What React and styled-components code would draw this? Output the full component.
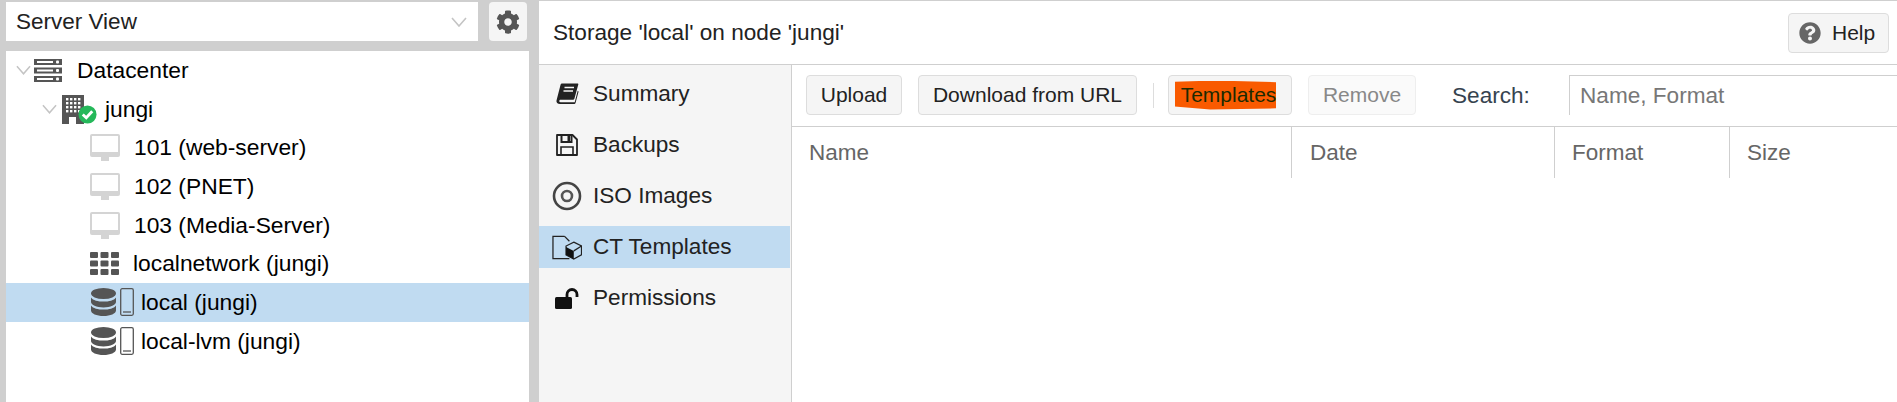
import styled, { createGlobalStyle } from 'styled-components';
import { FaCog, FaQuestionCircle } from 'react-icons/fa';

const GlobalStyle = createGlobalStyle`
    html, body, #root { margin: 0; height: 100%; overflow: hidden; }
    body { font-family: "Liberation Sans", Arial, sans-serif; color: #000; }
`;

const Page = styled.div`
    display: flex;
    height: 402px;
    background: #cfcfcf;
`;

const Sidebar = styled.aside`
    width: 523px;
    margin: 2px 10px 0 6px;
    display: flex;
    flex-direction: column;
    gap: 10px;
`;

const ViewBar = styled.div`
    display: flex;
    gap: 11px;
    height: 39px;
    margin-right: 2px;
`;

const ViewSelect = styled.div`
    flex: 1;
    display: flex;
    align-items: center;
    justify-content: space-between;
    padding: 0 11px 0 10px;
    background: #fff;
    font-size: 22.5px;
    color: #222;
`;

const GearButton = styled.button`
    width: 38px;
    border: 0;
    border-radius: 4px;
    padding: 0;
    background: #f5f5f5;
    color: #555;
    font-size: 24px;
    display: flex;
    align-items: center;
    justify-content: center;
`;

const Tree = styled.div`
    flex: 1;
    background: #fff;
`;

const TreeRow = styled.div`
    display: flex;
    align-items: center;
    height: 38.7px;
    padding-left: ${p => p.$indent}px;
    background: ${p => (p.$selected ? '#c0dbf1' : 'transparent')};
    font-size: 22.8px;
`;

const Toggle = styled.span`
    width: ${p => p.$width}px;
    display: flex;
    align-items: center;
`;

const TreeIcon = styled.span`
    position: relative;
    width: ${p => p.$width}px;
    flex: none;
    display: flex;
    align-items: center;
    gap: 4px;
`;

const Badge = styled.svg`
    position: absolute;
    left: 16px;
    top: 10px;
`;

const Main = styled.main`
    flex: 1;
    min-width: 0;
    display: flex;
    flex-direction: column;
    background: #fff;
    border-top: 1px solid #cfcfcf;
`;

const Header = styled.header`
    height: 63px;
    flex: none;
    display: flex;
    align-items: center;
    justify-content: space-between;
    padding: 0 8px 0 14px;
    border-bottom: 1px solid #cfcfcf;
    font-size: 22.6px;
    color: #222;
`;

const HelpButton = styled.button`
    height: 40px;
    width: 101px;
    display: flex;
    align-items: center;
    gap: 11px;
    padding: 0 0 0 10px;
    background: #f5f5f5;
    border: 1px solid #ddd;
    border-radius: 4px;
    font: 21px "Liberation Sans", Arial, sans-serif;
    color: #222;
    svg { color: #666; font-size: 22px; }
`;

const Content = styled.div`
    flex: 1;
    display: flex;
    min-height: 0;
`;

const Menu = styled.nav`
    width: 251px;
    flex: none;
    display: flex;
    flex-direction: column;
    gap: 9px;
    padding: 8px 1px 0 0;
    background: #f5f5f5;
    border-right: 1px solid #cfcfcf;
`;

const MenuItem = styled.div`
    height: 42px;
    display: flex;
    align-items: center;
    padding-left: 54px;
    position: relative;
    font-size: 22.6px;
    color: #222;
    background: ${p => (p.$active ? '#c0dbf1' : 'transparent')};
`;

const MenuIcon = styled.span`
    position: absolute;
    left: 13px;
    width: 30px;
    display: flex;
    justify-content: center;
`;

const Panel = styled.section`
    flex: 1;
    min-width: 0;
    display: flex;
    flex-direction: column;
`;

const Toolbar = styled.div`
    height: 51px;
    flex: none;
    display: flex;
    align-items: flex-start;
    gap: 16px;
    padding: 10px 0 0 14px;
    border-bottom: 1px solid #cfcfcf;
`;

const ToolButton = styled.button`
    height: 40px;
    width: ${p => p.$width}px;
    flex: none;
    padding: 0;
    background: ${p => (p.$disabled ? '#fafafa' : '#f5f5f5')};
    border: 1px solid ${p => (p.$disabled ? '#eee' : '#ddd')};
    border-radius: 4px;
    font: 21px "Liberation Sans", Arial, sans-serif;
    color: ${p => (p.$disabled ? '#888' : '#222')};
`;

const Highlight = styled.span`
    display: inline-block;
    padding: 2px 0 3px 6px;
    margin-right: 9px;
    background: #f95a00;
    color: #1c2a00;
    clip-path: polygon(0 4%, 40% 0, 100% 6%, 100% 96%, 35% 100%, 0 90%);
`;

const Separator = styled.span`
    width: 1px;
    height: 25px;
    flex: none;
    margin: 8px -2px 0 0;
    background: #ddd;
`;

const SearchLabel = styled.label`
    margin: 8px 0 0 20px;
    width: 101px;
    flex: none;
    font-size: 22.6px;
    color: #36434f;
`;

const SearchField = styled.input`
    flex: 1;
    min-width: 0;
    height: 40px;
    box-sizing: border-box;
    padding: 0 10px;
    border: 0;
    border-top: 1px solid #cfcfcf;
    border-left: 1px solid #cfcfcf;
    outline: 0;
    font: 22.6px "Liberation Sans", Arial, sans-serif;
    &::placeholder { color: #777; opacity: 1; }
`;

const GridHeader = styled.div`
    display: flex;
    height: 51px;
`;

const Column = styled.div`
    width: ${p => p.$width}px;
    flex: ${p => (p.$width ? 'none' : 1)};
    box-sizing: border-box;
    display: flex;
    align-items: center;
    padding-left: ${p => p.$inset}px;
    border-right: ${p => (p.$width ? '1px solid #cfcfcf' : '0')};
    font-size: 22.5px;
    color: #666;
`;

const Chevron = ({ width = 16 }) => (
    <svg width={width} height="10" viewBox="0 0 16 10">
        <polyline points="1,1 8,9 15,1" fill="none" stroke="#c4c4c4" strokeWidth="1.6" />
    </svg>
);

const ServerIcon = () => (
    <svg width="28" height="23" viewBox="0 0 28 23">
        {[0, 8.5, 17].map(y => (
            <g key={y}>
                <rect x="0" y={y} width="28" height="6" fill="#555" />
                <rect x="3" y={y + 2} width="16" height="2" fill="#fff" />
                <rect x="22" y={y + 1.5} width="3" height="3" rx="1" fill="#fff" />
            </g>
        ))}
    </svg>
);

const NodeIcon = () => (
    <>
        <svg width="22" height="29" viewBox="0 0 22 29">
            <rect width="22" height="29" fill="#555" />
            {[3, 7, 11, 15].map(y =>
                [4, 8, 12, 16].map(x => <rect key={`${x}-${y}`} x={x} y={y} width="2.4" height="2.4" fill="#fff" />)
            )}
            <rect x="7" y="22" width="7" height="7" fill="#fff" />
        </svg>
        <Badge width="19" height="19" viewBox="0 0 20 20">
            <circle cx="10" cy="10" r="9.5" fill="#25b85a" />
            <polyline points="5,10 8.7,13.5 15,6.5" fill="none" stroke="#fff" strokeWidth="3" />
        </Badge>
    </>
);

const GuestIcon = () => (
    <svg width="30" height="27" viewBox="0 0 30 27">
        <path d="M2 0h26a2 2 0 0 1 2 2v19a2 2 0 0 1-2 2H2a2 2 0 0 1-2-2V2a2 2 0 0 1 2-2z" fill="#d4d4d4" />
        <rect x="2" y="2" width="26" height="16" fill="#fff" />
        <rect x="11" y="23" width="8" height="4" fill="#d4d4d4" />
    </svg>
);

const GridIcon = () => (
    <svg width="29" height="23" viewBox="0 0 29 23">
        {[0, 8.5, 17].map(y =>
            [0, 10.5, 21].map(x => <rect key={`${x}-${y}`} x={x} y={y} width="8" height="6" rx="1" fill="#555" />)
        )}
    </svg>
);

const DatabaseIcon = () => (
    <svg width="25" height="28" viewBox="0 0 25 28">
        <ellipse cx="12.5" cy="5.5" rx="12.5" ry="5.5" fill="#555" />
        <path d="M0 9.5C2 12.5 7 13.6 12.5 13.6S23 12.5 25 9.5V14c0 3-5.6 5.4-12.5 5.4S0 17 0 14z" fill="#555" />
        <path d="M0 17.5c2 3 7 4.1 12.5 4.1S23 20.5 25 17.5v5c0 3-5.6 5.5-12.5 5.5S0 25.5 0 22.5z" fill="#555" />
    </svg>
);

const DiskIcon = () => (
    <svg width="14" height="28" viewBox="0 0 14 28">
        <rect x="0.7" y="0.7" width="12.6" height="26.6" rx="1.5" fill="none" stroke="#555" strokeWidth="1.3" />
        <line x1="3" y1="24" x2="11" y2="24" stroke="#555" strokeWidth="1.3" />
    </svg>
);

const BookIcon = () => (
    <svg width="23" height="22" viewBox="0 0 23 22">
        <path d="M6 .5h15.5c.6 0 1 .5.8 1L18.3 16c-.2.6-.6.8-1.2.8H4.5c-1.5 0-1.8 2.4 0 2.4h14.2l3-11.5.9.8-3 11.3c-.2.8-.7 1.2-1.3 1.2H4C1.500 21 0 19.300.5 17.500L4.500 2C4.800 1 5.200.5 6 .5z" fill="#222" />
        <path d="M8.500 4.500h9.500M7.500 8h9.500" stroke="#f5f5f5" strokeWidth="1.3" />
    </svg>
);

const FloppyIcon = () => (
    <svg width="22" height="22" viewBox="0 0 22 22">
        <path d="M1 1h15.500L21 5.500V21H1z" fill="none" stroke="#222" strokeWidth="1.8" strokeLinejoin="round" />
        <path d="M5.500 1v7h10V1" fill="none" stroke="#222" strokeWidth="2" />
        <rect x="11.5" y="2" width="2.5" height="5" fill="#222" />
        <path d="M5 21v-8h12v8" fill="none" stroke="#222" strokeWidth="1.6" />
    </svg>
);

const DiscIcon = () => (
    <svg width="30" height="30" viewBox="0 0 30 30">
        <circle cx="15" cy="15" r="13" fill="none" stroke="#444" strokeWidth="2.6" />
        <circle cx="15" cy="15" r="5" fill="none" stroke="#555" strokeWidth="2.6" />
    </svg>
);

const TemplateIcon = () => (
    <svg width="31" height="25" viewBox="0 0 31 25">
        <path d="M13 1H1v23h17M13 1l5 5" fill="none" stroke="#222" strokeWidth="1.3" />
        <path d="M22.500 7l8 4v9l-8 4.500-8-4.500v-9z" fill="#c0dbf1" stroke="#222" strokeWidth="1.3" />
        <path d="M14.500 12l8 4v8.500l-8-4.500z" fill="#111" />
        <path d="M22.500 16l8-5" stroke="#222" strokeWidth="1.3" />
    </svg>
);

const UnlockIcon = () => (
    <svg width="24" height="21" viewBox="0 0 24 21">
        <rect x="0" y="9" width="17" height="12" rx="1.5" fill="#111" />
        <path d="M12 10V6.500a5 5 0 0 1 10 0V9" fill="none" stroke="#111" strokeWidth="2.8" />
    </svg>
);

const treeRows = [
    { label: 'Datacenter', indent: 10, toggle: 18, width: 43, icon: <ServerIcon /> },
    { label: 'jungi', indent: 36, toggle: 20, width: 43, icon: <NodeIcon /> },
    { label: '101 (web-server)', indent: 84, width: 44, icon: <GuestIcon /> },
    { label: '102 (PNET)', indent: 84, width: 44, icon: <GuestIcon /> },
    { label: '103 (Media-Server)', indent: 84, width: 44, icon: <GuestIcon /> },
    { label: 'localnetwork (jungi)', indent: 84, width: 43, icon: <GridIcon /> },
    { label: 'local (jungi)', indent: 85, width: 50, selected: true, icon: <><DatabaseIcon /><DiskIcon /></> },
    { label: 'local-lvm (jungi)', indent: 85, width: 50, icon: <><DatabaseIcon /><DiskIcon /></> },
];

const menuItems = [
    { label: 'Summary', icon: <BookIcon /> },
    { label: 'Backups', icon: <FloppyIcon /> },
    { label: 'ISO Images', icon: <DiscIcon /> },
    { label: 'CT Templates', icon: <TemplateIcon />, active: true },
    { label: 'Permissions', icon: <UnlockIcon /> },
];

const columns = [
    { label: 'Name', width: 500, inset: 17 },
    { label: 'Date', width: 263, inset: 18 },
    { label: 'Format', width: 175, inset: 17 },
    { label: 'Size', inset: 17 },
];

export default function App() {
    return (
        <Page>
            <GlobalStyle />
            <Sidebar>
                <ViewBar>
                    <ViewSelect>
                        Server View
                        <Chevron />
                    </ViewSelect>
                    <GearButton><FaCog /></GearButton>
                </ViewBar>
                <Tree>
                    {treeRows.map(row => (
                        <TreeRow key={row.label} $indent={row.indent} $selected={row.selected}>
                            {row.toggle && <Toggle $width={row.toggle}><Chevron width={15} /></Toggle>}
                            <TreeIcon $width={row.width}>{row.icon}</TreeIcon>
                            {row.label}
                        </TreeRow>
                    ))}
                </Tree>
            </Sidebar>
            <Main>
                <Header>
                    Storage 'local' on node 'jungi'
                    <HelpButton><FaQuestionCircle /> Help</HelpButton>
                </Header>
                <Content>
                    <Menu>
                        {menuItems.map(item => (
                            <MenuItem key={item.label} $active={item.active}>
                                <MenuIcon>{item.icon}</MenuIcon>
                                {item.label}
                            </MenuItem>
                        ))}
                    </Menu>
                    <Panel>
                        <Toolbar>
                            <ToolButton $width={96}>Upload</ToolButton>
                            <ToolButton $width={219}>Download from URL</ToolButton>
                            <Separator />
                            <ToolButton $width={124}><Highlight>Templates</Highlight></ToolButton>
                            <ToolButton $width={108} $disabled>Remove</ToolButton>
                            <SearchLabel>Search:</SearchLabel>
                            <SearchField placeholder="Name, Format" />
                        </Toolbar>
                        <GridHeader>
                            {columns.map(col => (
                                <Column key={col.label} $width={col.width} $inset={col.inset}>{col.label}</Column>
                            ))}
                        </GridHeader>
                    </Panel>
                </Content>
            </Main>
        </Page>
    );
}
